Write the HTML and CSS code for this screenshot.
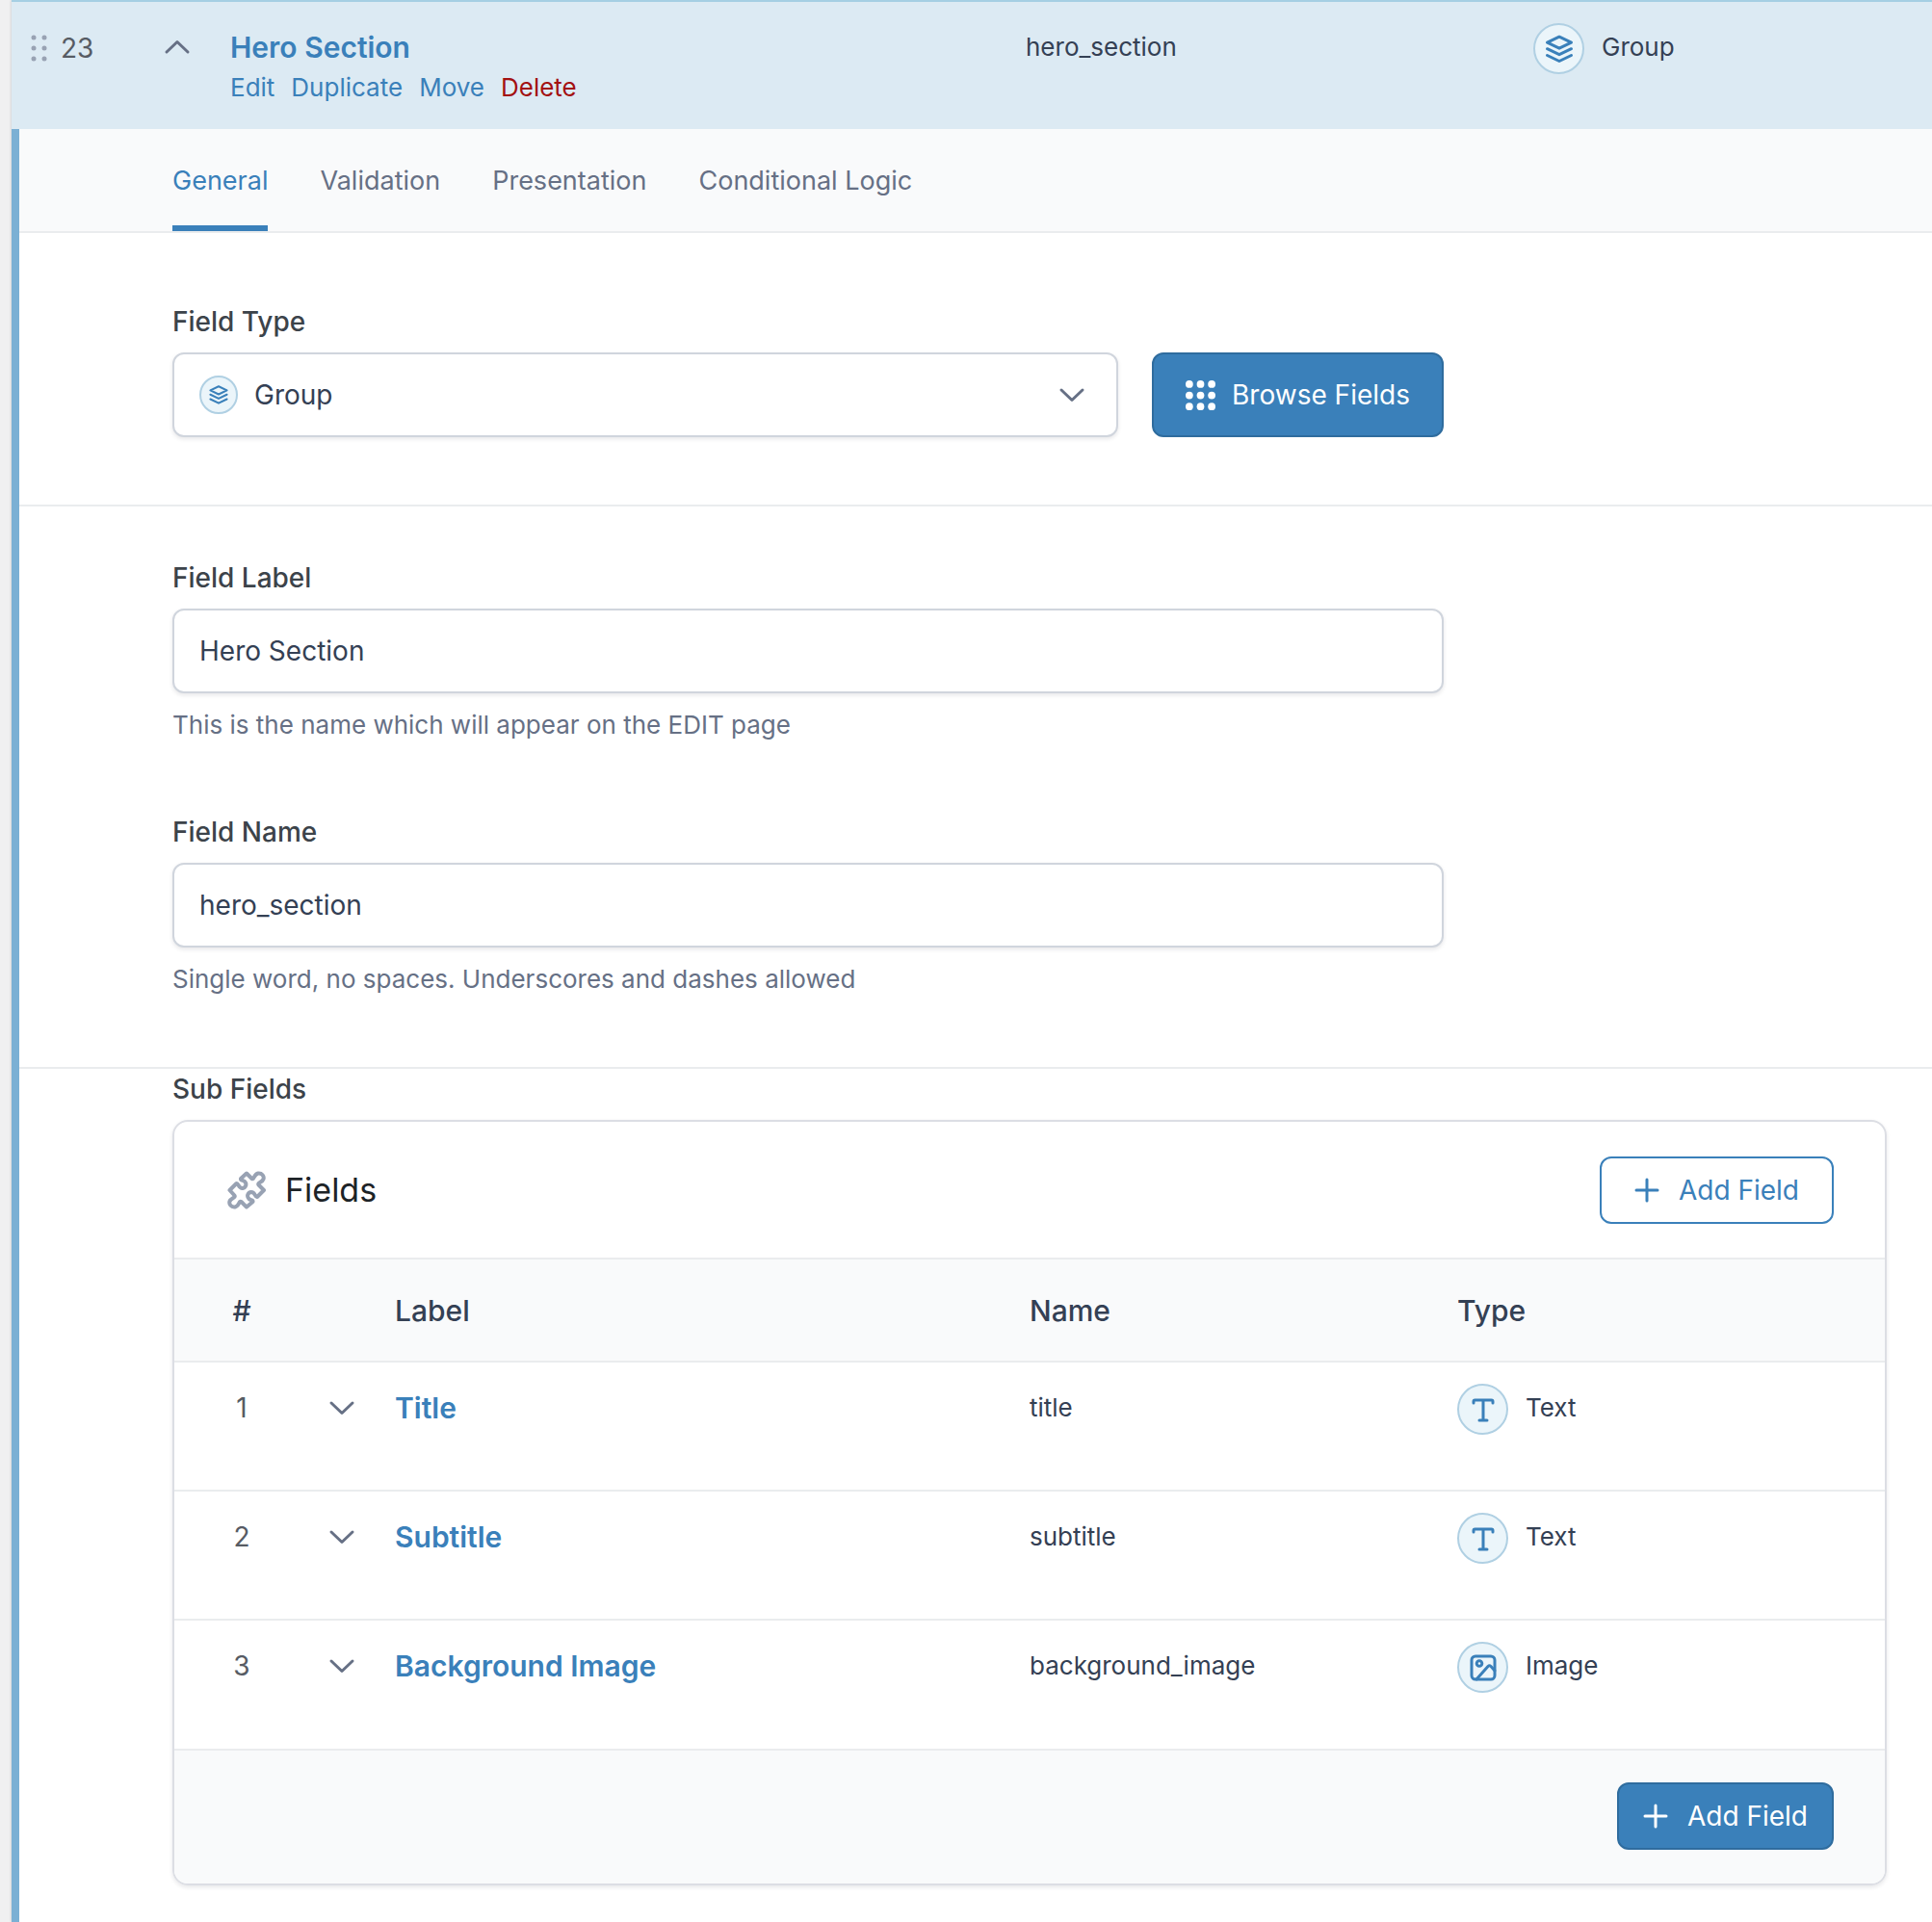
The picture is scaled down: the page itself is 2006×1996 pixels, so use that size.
FILE: index.html
```html
<!DOCTYPE html>
<html lang="en">
<head>
	<meta charset="UTF-8">
	<title>Edit Field Group</title>
	<meta name="viewport" content="width=device-width, initial-scale=1.0">
	<link rel="stylesheet" href="styles.css">
</head>
<body>
	<!-- shared icons -->
	<svg class="sprite" aria-hidden="true">
		<symbol id="i-down" viewBox="0 0 28 16"><path d="M3 3l11 10.500L25 3"/></symbol>
		<symbol id="i-plus" viewBox="0 0 26 26"><path d="M13 2v22M2 13h22"/></symbol>
		<symbol id="i-group" viewBox="0 0 32 32"><path d="M16 3.200L28.500 9.200 16 15.200 3.500 9.200zM3.500 15.700l12.500 6 12.500-6M3.500 22.500l12.500 6 12.500-6"/></symbol>
		<symbol id="i-text" viewBox="0 0 32 32"><path d="M6 9V7.500Q6 6 7.500 6h17Q26 6 26 7.500V9M16 6v21M12 27h8"/></symbol>
		<symbol id="i-image" viewBox="0 0 32 32"><rect x="4" y="4" width="24" height="24" rx="4"/><circle cx="12" cy="11.500" r="2.800"/><path d="M28 19l-4-4.500q-1.500-1.500-3 0L9 28"/></symbol>
	</svg>

	<div class="field-object">
		<div class="handle">
			<div class="order">
				<svg class="drag" viewBox="0 0 18 28"><circle cx="3" cy="3" r="2.500"/><circle cx="14" cy="3" r="2.500"/><circle cx="3" cy="14" r="2.500"/><circle cx="14" cy="14" r="2.500"/><circle cx="3" cy="25" r="2.500"/><circle cx="14" cy="25" r="2.500"/></svg>
				<span>23</span>
			</div>
			<button class="toggle open" type="button" aria-label="Close field"><svg><use href="#i-down"/></svg></button>
			<div class="title">
				<a class="name-link" href="#">Hero Section</a>
				<div class="row-options">
					<a href="#">Edit</a>
					<a href="#">Duplicate</a>
					<a href="#">Move</a>
					<a class="delete" href="#">Delete</a>
				</div>
			</div>
			<div class="handle-name">hero_section</div>
			<div class="type"><span class="type-icon"><svg><use href="#i-group"/></svg></span>Group</div>
		</div>

		<div class="settings">
			<nav class="tabs">
				<a class="active" href="#">General</a>
				<a href="#">Validation</a>
				<a href="#">Presentation</a>
				<a href="#">Conditional Logic</a>
			</nav>

			<div class="section section-type">
				<label for="field-type">Field Type</label>
				<div class="type-row">
					<div class="select-wrap">
						<span class="type-icon small"><svg><use href="#i-group"/></svg></span>
						<select id="field-type"><option>Group</option><option>Text</option><option>Image</option></select>
						<svg class="arrow"><use href="#i-down"/></svg>
					</div>
					<button class="btn primary browse" type="button">
						<svg class="grid-icon" viewBox="0 0 32 32"><circle cx="4" cy="4" r="4"/><circle cx="16" cy="4" r="4"/><circle cx="28" cy="4" r="4"/><circle cx="4" cy="16" r="4"/><circle cx="16" cy="16" r="4"/><circle cx="28" cy="16" r="4"/><circle cx="4" cy="28" r="4"/><circle cx="16" cy="28" r="4"/><circle cx="28" cy="28" r="4"/></svg>
						Browse Fields
					</button>
				</div>
			</div>

			<div class="section section-names">
				<div class="setting">
					<label for="field-label">Field Label</label>
					<input id="field-label" type="text" value="Hero Section">
					<p>This is the name which will appear on the EDIT page</p>
				</div>
				<div class="setting">
					<label for="field-name">Field Name</label>
					<input id="field-name" type="text" value="hero_section">
					<p>Single word, no spaces. Underscores and dashes allowed</p>
				</div>
			</div>

			<div class="sub-fields">
				<h3>Sub Fields</h3>
				<div class="box">
					<div class="box-head">
						<svg class="puzzle" viewBox="0 0 40 40"><path d="M20 2.500l5.500 5.500c2.500 1.500 2-4.500 6.500-5.500 4-.5 6.500 3 5.500 6-1.200 3.500-6.500 3.500-5 6l5.500 5.500-7 7c-2 1-2-5.500-6.500-5-3.500.8-4.500 4.500-2 7 1.500 1.500 4.500 1 4 3L20 37.500l-5.500-5.500c-2.500-1.500-2 4.500-6.500 5.500-4 .5-6.500-3-5.500-6 1.200-3.500 6.500-3.500 5-6L2.500 20l7-7c2-1 2 5.500 6.500 5 3.500-.8 4.500-4.500 2-7-1.500-1.500-4.500-1-4-3z"/></svg>
						<h2>Fields</h2>
						<button class="btn outline" type="button"><svg><use href="#i-plus"/></svg>Add Field</button>
					</div>
					<table>
						<thead>
							<tr><th class="num">#</th><th class="tog"></th><th class="lab">Label</th><th class="nam">Name</th><th>Type</th></tr>
						</thead>
						<tbody>
							<tr>
								<td class="num">1</td>
								<td class="tog"><button class="toggle" type="button" aria-label="Open Title"><svg><use href="#i-down"/></svg></button></td>
								<td><a class="name-link" href="#">Title</a></td>
								<td>title</td>
								<td><div class="type"><span class="type-icon"><svg><use href="#i-text"/></svg></span>Text</div></td>
							</tr>
							<tr>
								<td class="num">2</td>
								<td class="tog"><button class="toggle" type="button" aria-label="Open Subtitle"><svg><use href="#i-down"/></svg></button></td>
								<td><a class="name-link" href="#">Subtitle</a></td>
								<td>subtitle</td>
								<td><div class="type"><span class="type-icon"><svg><use href="#i-text"/></svg></span>Text</div></td>
							</tr>
							<tr>
								<td class="num">3</td>
								<td class="tog"><button class="toggle" type="button" aria-label="Open Background Image"><svg><use href="#i-down"/></svg></button></td>
								<td><a class="name-link" href="#">Background Image</a></td>
								<td>background_image</td>
								<td><div class="type"><span class="type-icon"><svg><use href="#i-image"/></svg></span>Image</div></td>
							</tr>
						</tbody>
					</table>
					<div class="box-foot">
						<button class="btn primary" type="button"><svg><use href="#i-plus"/></svg>Add Field</button>
					</div>
				</div>
			</div>
		</div>
	</div>
</body>
</html>
```
FILE: styles.css
```css
* {
	box-sizing: border-box;
}

body {
	margin: 0;
	padding-left: 12px;
	background: #f0f0f1;
	color: #344054;
	font-family: Inter, "Liberation Sans", sans-serif;
	font-size: 26px;
	line-height: 36px;
}

a {
	color: #3a80ba;
	text-decoration: none;
}

h2, h3, p {
	margin: 0;
}

button, input, select {
	font: inherit;
	color: inherit;
}

svg {
	fill: none;
	stroke: currentColor;
	stroke-width: 3;
	stroke-linecap: round;
	stroke-linejoin: round;
}

.sprite {
	display: none;
}

.field-object {
	min-height: 100vh;
	background: #fff;
	box-shadow: 0 0 3px rgba(0, 0, 0, 0.2);
}

/* header row */
.handle {
	display: grid;
	grid-template-columns: 158px 69px 826px 527px 1fr;
	height: 134px;
	padding-top: 29px;
	border-top: 2px solid #a5cfe3;
	background: #dceaf3;
}

.order {
	display: flex;
	align-items: center;
	gap: 13px;
	height: 38px;
	padding-left: 20px;
	font-size: 28px;
	color: #575c64;
}

.drag {
	width: 18px;
	height: 28px;
	fill: #98a2b3;
	stroke: none;
}

.toggle {
	display: block;
	height: 36px;
	padding: 0;
	border: 0;
	background: none;
	color: #667085;
}

.toggle svg {
	display: block;
	width: 28px;
	height: 16px;
}

.toggle.open svg {
	transform: rotate(180deg);
}

.name-link {
	font-size: 30px;
	font-weight: 600;
}

.row-options {
	display: flex;
	gap: 17px;
	margin-top: 4px;
}

.row-options .delete {
	color: #a31111;
}

.type {
	display: flex;
	gap: 18px;
	height: 36px;
}

.type-icon {
	display: flex;
	flex: none;
	align-items: center;
	justify-content: center;
	width: 53px;
	height: 53px;
	margin-top: -7px;
	border: 2px solid #b0d0e3;
	border-radius: 50%;
	background: #ebf5fa;
	color: #3a80ba;
}

.type-icon svg {
	width: 32px;
	height: 32px;
}

.type-icon.small {
	width: 40px;
	height: 40px;
	margin: 0;
}

.type-icon.small svg {
	width: 22px;
	height: 22px;
}

.settings {
	min-height: calc(100vh - 134px);
	border-left: 8px solid #7bb0d4;
}

.tabs {
	display: flex;
	gap: 54px;
	height: 108px;
	padding-left: 159px;
	border-bottom: 2px solid #eaecee;
	background: #f9fafb;
	font-size: 27px;
}

.tabs a {
	padding-top: 36px;
	color: #667085;
}

.tabs .active {
	border-bottom: 6px solid #3a80ba;
	color: #3a80ba;
}

.section {
	padding: 56px 507px 0 159px;
	border-bottom: 2px solid #eaecee;
}

.section-type {
	padding-top: 74px;
	padding-bottom: 70px;
}

.section-names {
	padding-bottom: 73px;
}

label, h3 {
	display: block;
	color: #3c434a;
	font-size: 28px;
	font-weight: 500;
	line-height: 36px;
}

label {
	margin-bottom: 14px;
}

.type-row {
	display: flex;
	gap: 35px;
}

.select-wrap, input {
	height: 88px;
	border: 2px solid #d0d5dd;
	border-radius: 12px;
	background: #fff;
	box-shadow: 0 2px 4px rgba(16, 24, 40, 0.1);
	font-size: 28px;
}

.select-wrap {
	display: flex;
	flex: 1;
	align-items: center;
	gap: 17px;
	padding: 0 32px 0 26px;
}

select {
	flex: 1;
	padding: 0;
	border: 0;
	background: none;
	appearance: none;
}

.arrow {
	width: 28px;
	height: 16px;
	color: #667085;
}

input {
	display: block;
	width: 100%;
	padding: 0 26px;
}

.setting + .setting {
	margin-top: 75px;
}

.setting p {
	margin-top: 15px;
	color: #667085;
}

.btn {
	display: flex;
	align-items: center;
	justify-content: center;
	gap: 20px;
	height: 70px;
	padding: 0 20px;
	border: 2px solid #3a80ba;
	border-radius: 12px;
	background: #fff;
	color: #3a80ba;
	font-size: 28px;
	white-space: nowrap;
}

.btn svg {
	flex: none;
	width: 26px;
	height: 26px;
}

.btn.primary {
	border-color: #2f6c9e;
	background: #3a80ba;
	color: #fff;
}

.btn.browse {
	gap: 17px;
	width: 303px;
	height: 88px;
}

.btn .grid-icon {
	width: 31px;
	height: 31px;
	fill: currentColor;
	stroke: none;
}

.sub-fields {
	padding: 3px 47px 38px 159px;
}

.box {
	margin-top: 14px;
	border: 2px solid #dcdee4;
	border-radius: 16px;
	box-shadow: 0 2px 4px rgba(16, 24, 40, 0.1);
	overflow: hidden;
}

.box-head {
	display: flex;
	align-items: center;
	height: 141px;
	padding: 0 53px 0 55px;
}

.box-head .btn {
	width: 243px;
	margin-left: auto;
}

.puzzle {
	width: 40px;
	height: 40px;
	margin-right: 20px;
	color: #98a2b3;
	stroke-width: 4;
}

h2 {
	color: #1d2327;
	font-size: 34px;
	font-weight: 400;
}

table {
	width: 100%;
	border-collapse: collapse;
	table-layout: fixed;
}

th, td {
	padding: 0;
	border-top: 2px solid #eaecee;
	text-align: left;
}

th {
	height: 107px;
	background: #f9fafb;
	font-size: 30px;
	font-weight: 500;
}

td {
	height: 134px;
	padding-top: 29px;
	vertical-align: top;
}

.num {
	width: 140px;
	text-align: center;
}

td.num {
	color: #575c64;
	font-size: 28px;
}

.tog {
	width: 89px;
}

.tog .toggle {
	margin-left: 20px;
}

.lab {
	width: 659px;
}

.nam {
	width: 444px;
}

.box-foot {
	display: flex;
	justify-content: flex-end;
	padding: 33px 53px 35px;
	border-top: 2px solid #eaecee;
	background: #f9fafb;
}

.box-foot .btn {
	width: 225px;
}
```
